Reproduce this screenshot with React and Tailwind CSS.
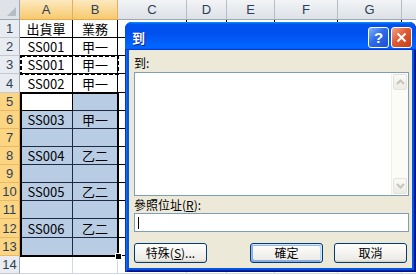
import React from "react";

const COLS = ["A", "B", "C", "D", "E", "F", "G", ""];
const ROWS = [1, 2, 3, 4, 5, 6, 7, 8, 9, 10, 11, 12, 13, 14];

const DATA = {
  1: ["出貨單", "業務"],
  2: ["SS001", "甲一"],
  3: ["SS001", "甲一"],
  4: ["SS002", "甲一"],
  6: ["SS003", "甲一"],
  8: ["SS004", "乙二"],
  10: ["SS005", "乙二"],
  12: ["SS006", "乙二"],
};

function ColHeader({ label, selected }) {
  return (
    <div
      className={
        selected
          ? "flex items-center justify-center border-r border-b border-r-[#e0b060] border-b-[#e9a844] bg-[linear-gradient(#fde9c0,#f6c96e)] font-['Liberation_Sans',sans-serif] text-[13px] leading-none text-[#2d3f58]"
          : "flex items-center justify-center border-r border-b border-r-[#b6bdc7] border-b-[#9ea8b4] bg-[linear-gradient(#f2f4f6,#dde1e6)] font-['Liberation_Sans',sans-serif] text-[13px] leading-none text-[#2d3f58]"
      }
    >
      {label}
    </div>
  );
}

function RowHeader({ n }) {
  const selected = n >= 5 && n <= 13;
  return (
    <div
      className={
        selected
          ? "flex items-center justify-center border-r border-b border-r-[#e9a844] border-b-[#eab866] bg-[#fcd582] font-['Liberation_Sans',sans-serif] text-[13px] leading-none text-[#2d3f58]"
          : "flex items-center justify-center border-r border-b border-r-[#9ea8b4] border-b-[#c3c9d2] bg-[#e8ebef] font-['Liberation_Sans',sans-serif] text-[13px] leading-none text-[#2d3f58]"
      }
    >
      {n}
    </div>
  );
}

function Cell({ r, ci }) {
  const inSel = r >= 5 && r <= 13 && ci <= 1;
  const active = r === 5 && ci === 0;
  const text = (DATA[r] && DATA[r][ci]) || "";
  let cls = "flex items-center justify-center overflow-hidden whitespace-nowrap border-r border-b leading-none ";
  if (r > 13) cls += "border-[#d0d7e5] bg-white";
  else if (inSel && !active) cls += "border-[#1c2a44] bg-[#b8cce4]";
  else cls += "border-black bg-white";
  return <div className={cls}>{text}</div>;
}

function Sheet() {
  return (
    <div className="grid grid-cols-[20px_53px_45px_69px_40px_48px_63px_64px_120px] grid-rows-[20px_18px_18px_18px_19px_18px_18px_18px_18px_18px_18px_18px_19px_18px_18px] text-[13px] text-black">
      <div className="relative border-r border-b border-[#9ea8b4] bg-[#dfe3e8]">
        <div className="absolute right-[3px] bottom-[3px] h-0 w-0 border-b-[9px] border-l-[9px] border-b-[#b4bcc6] border-l-transparent" />
      </div>
      {COLS.map((c, ci) => (
        <ColHeader key={ci} label={c} selected={ci <= 1} />
      ))}
      {ROWS.map((r) => (
        <React.Fragment key={r}>
          <RowHeader n={r} />
          {COLS.map((c, ci) => (
            <Cell key={ci} r={r} ci={ci} />
          ))}
        </React.Fragment>
      ))}
    </div>
  );
}

function XpButton({ children, primary, className = "" }) {
  return (
    <div
      className={`flex h-[20px] w-[73px] items-center justify-center rounded-[3px] border border-[#003c74] bg-[linear-gradient(180deg,#fff,#ecebe6_86%,#d6d0c5)] text-[12px] leading-none text-black ${
        primary
          ? "shadow-[inset_-1px_1px_#cee7ff,inset_1px_2px_#98b8ea,inset_-2px_2px_#bcd4f6,inset_1px_-1px_#89ade4,inset_2px_-2px_#89ade4]"
          : ""
      } ${className}`}
    >
      {children}
    </div>
  );
}

function ScrollBtn({ up }) {
  return (
    <div className="flex h-[16px] w-full items-center justify-center rounded-[2px] border border-[#e4e3db] bg-[linear-gradient(#f9f9f6,#ecebe4)]">
      <svg width="9" height="6" viewBox="0 0 9 6">
        <path
          d={up ? "M1 5L4.5 1.5L8 5" : "M1 1L4.5 4.5L8 1"}
          fill="none"
          stroke="#c7c5b9"
          strokeWidth="2"
        />
      </svg>
    </div>
  );
}

function GoToDialog() {
  return (
    <div className="absolute left-[125px] top-[22px] flex h-[250px] w-[291px] flex-col overflow-hidden rounded-t-[7px] bg-[#0055e5] shadow-[inset_1px_0_#0831d9,inset_-1px_0_#00138c,inset_0_-1px_#00138c,inset_2px_0_#166aee,inset_-2px_0_#001ea0,inset_0_-2px_#001ea0]">
      {/* title bar */}
      <div className="flex h-[28px] shrink-0 items-start bg-[linear-gradient(180deg,#0997ff,#0053ee_8%,#0050ee_40%,#06f_88%,#06f_93%,#005bff_95%,#003dd7_96%,#003dd7)] pl-[7px] pr-[4px] pt-[5px]">
        <span className="text-[13px] font-bold leading-[21px] text-white [text-shadow:1px_1px_0_#0f1c8a]">到</span>
        <div className="ml-auto flex gap-[2px]">
          <div className="flex h-[21px] w-[21px] items-center justify-center rounded-[3px] border border-white bg-[linear-gradient(135deg,#86b4fb,#2f6aea_45%,#1a50d4)] font-['Liberation_Sans',sans-serif] text-[15px] font-bold leading-none text-white">
            ?
          </div>
          <div className="flex h-[21px] w-[21px] items-center justify-center rounded-[3px] border border-white bg-[linear-gradient(135deg,#f2a68a,#e05a34_45%,#c43e18)]">
            <svg width="11" height="11" viewBox="0 0 11 11">
              <path d="M1.5 1.5L9.5 9.5M9.5 1.5L1.5 9.5" stroke="#fff" strokeWidth="2" />
            </svg>
          </div>
        </div>
      </div>

      {/* body */}
      <div className="mx-[4px] flex flex-1 flex-col bg-[#ece9d8] pl-[5px] pr-[3px] pt-[6px] text-[12px] leading-[14px] text-black">
        <div>到:</div>
        <div className="mt-[2px] flex h-[124px] border border-[#7f9db9] bg-white">
          <div className="flex-1" />
          <div className="flex w-[17px] flex-col justify-between border-l border-[#f0efe8] bg-[#fbfbf8] p-[1px]">
            <ScrollBtn up />
            <ScrollBtn />
          </div>
        </div>
        <div className="mt-[2px]">
          參照位址(<span className="underline">R</span>):
        </div>
        <div className="mt-[1px] h-[19px] border border-[#7f9db9] bg-white pl-[3px] pt-[3px]">
          <div className="h-[12px] w-px bg-black" />
        </div>
        <div className="mt-[11px] flex">
          <XpButton>
            特殊(<span className="underline">S</span>)...
          </XpButton>
          <XpButton primary className="ml-auto">
            確定
          </XpButton>
          <XpButton className="ml-[11px] mr-[2px]">取消</XpButton>
        </div>
      </div>
      <div className="h-[4px] shrink-0" />
    </div>
  );
}

export default function App() {
  return (
    <div className="relative h-[275px] w-[416px] overflow-hidden bg-white font-['Noto_Sans_CJK_TC',sans-serif]">
      <Sheet />

      {/* copy marquee around A3:B3 */}
      <svg className="pointer-events-none absolute left-[20px] top-[55px]" width="100" height="20">
        <rect x="1" y="1" width="97" height="18" fill="none" stroke="#000" strokeWidth="2" strokeDasharray="4 2" />
      </svg>

      {/* selection A5:B13 */}
      <div className="pointer-events-none absolute left-[20px] top-[92px] h-[165px] w-[99px] border-2 border-black" />
      <div className="absolute left-[115px] top-[253px] h-[7px] w-[7px] border border-white bg-black" />

      <GoToDialog />
    </div>
  );
}
